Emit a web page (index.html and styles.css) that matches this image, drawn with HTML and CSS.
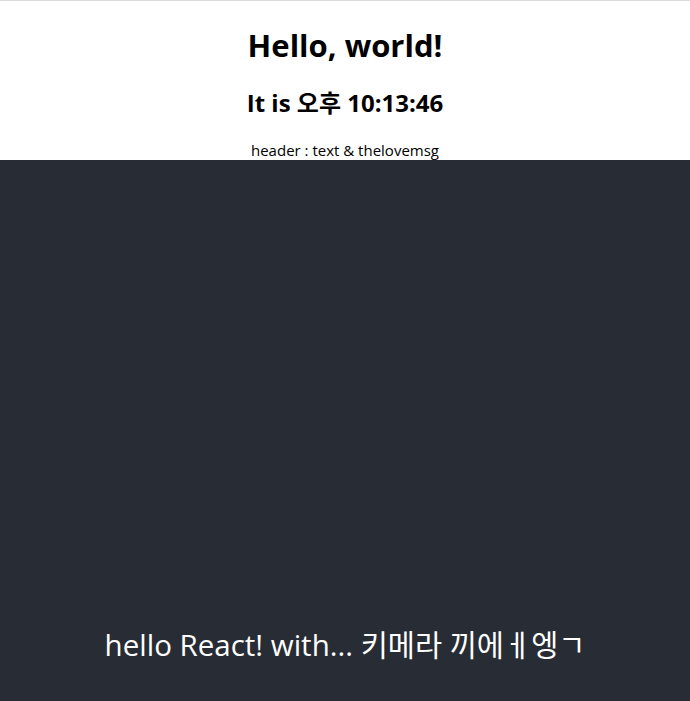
FILE: index.html
```html
<!DOCTYPE html>
<html lang="ko">
<head>
<meta charset="utf-8">
<title>React App</title>
<link rel="stylesheet" href="styles.css">
</head>
<body>
<div class="root">
  <div class="top">
    <h1 class="title">Hello, world!</h1>
    <h2 class="clock">It is 오후 10:13:46</h2>
    <div class="caption">header : text &amp; thelovemsg</div>
  </div>
  <header class="app-header">
    <div class="spacer"></div>
    <p class="msg">hello React! with... 키메라 끼에ㅔ엥ㄱ</p>
  </header>
</div>
</body>
</html>
```
FILE: styles.css
```css
html, body {
  margin: 0;
  padding: 0;
}
body {
  font-family: "Open Sans", "Noto Sans CJK KR", sans-serif;
  background: #ffffff;
  color: #000;
}
.root {
  border-top: 1px solid #d9d9d9;
}
.top {
  text-align: center;
}
.title {
  font-size: 31px;
  font-weight: 700;
  margin: 0;
  padding-top: 23px;
  line-height: 43px;
}
.clock {
  font-size: 24px;
  font-weight: 700;
  margin: 0;
  padding-top: 19px;
  line-height: 34px;
}
.caption {
  font-size: 15px;
  line-height: 20px;
  padding-top: 20px;
}
.app-header {
  background: #282c34;
  color: #ffffff;
  text-align: center;
  display: flex;
  flex-direction: column;
  min-height: 560px;
}
.spacer {
  height: 465px;
}
.msg {
  margin: 0;
  font-size: 29.5px;
  line-height: 40px;
}
```
